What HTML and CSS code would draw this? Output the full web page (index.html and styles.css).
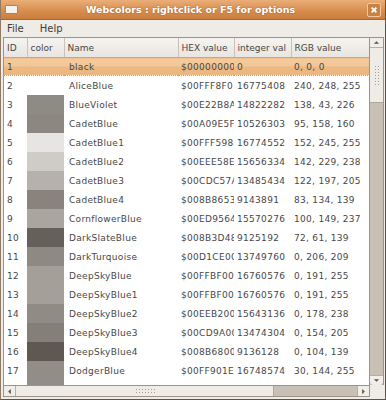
FILE: index.html
```html
<!DOCTYPE html>
<html lang="en">
<head>
  <meta charset="UTF-8" />
  <title>Webcolors</title>
  <link rel="stylesheet" href="styles.css">
</head>
<body>
  <div class="window">
    <div class="titlebar">
      <span class="win-icon"></span>
      <span class="title">Webcolors : rightclick or F5 for options</span>
      <span class="close-btn">
        <svg viewBox="0 0 10 10"><path d="M2 2L8 8M8 2L2 8"/></svg>
      </span>
    </div>

    <div class="menubar">
      <span>File</span>
      <span>Help</span>
    </div>

    <div class="frame">
      <div class="view">
        <div class="list">
          <table class="colors">
            <colgroup>
              <col class="c-id"><col class="c-color"><col class="c-name"><col class="c-hex"><col class="c-int"><col class="c-rgb">
            </colgroup>
            <thead>
              <tr><th>ID</th><th>color</th><th>Name</th><th>HEX value</th><th>integer val</th><th>RGB value</th></tr>
            </thead>
            <tbody id="rows"></tbody>
          </table>
        </div>
        <div class="vscroll">
          <div class="arrow"><svg viewBox="0 0 8 8"><path d="M1 5.5L4 2.5L7 5.5Z"/></svg></div>
          <div class="vthumb"><span class="grip"></span></div>
          <div class="vtrack"></div>
          <div class="arrow arrow-down"><svg viewBox="0 0 8 8"><path d="M1 2.5L4 5.5L7 2.5Z"/></svg></div>
        </div>
      </div>
      <div class="hscroll">
        <div class="arrow-h"><svg viewBox="0 0 8 8"><path d="M5.5 1L2.5 4L5.5 7Z"/></svg></div>
        <div class="hthumb"><span class="grip-h"></span></div>
        <div class="htrack"></div>
        <div class="arrow-h arrow-right"><svg viewBox="0 0 8 8"><path d="M2.5 1L5.5 4L2.5 7Z"/></svg></div>
      </div>
    </div>
  </div>

  <script>
    // id, swatch (as shown), name, hex, integer, rgb
    const colors = [
      [1, '', 'black', '$00000000', '0', '0, 0, 0'],
      [2, '', 'AliceBlue', '$00FFF8F0', '16775408', '240, 248, 255'],
      [3, '#8e8a84', 'BlueViolet', '$00E22B8A', '14822282', '138, 43, 226'],
      [4, '#8d8781', 'CadetBlue', '$00A09E5F', '10526303', '95, 158, 160'],
      [5, '#e6e5e3', 'CadetBlue1', '$00FFF598', '16774552', '152, 245, 255'],
      [6, '#cfccc8', 'CadetBlue2', '$00EEE58E', '15656334', '142, 229, 238'],
      [7, '#b5b2ad', 'CadetBlue3', '$00CDC57A', '13485434', '122, 197, 205'],
      [8, '#8a837d', 'CadetBlue4', '$008B8653', '9143891', '83, 134, 139'],
      [9, '#a9a6a0', 'CornflowerBlue', '$00ED9564', '15570276', '100, 149, 237'],
      [10, '#66605a', 'DarkSlateBlue', '$008B3D48', '9125192', '72, 61, 139'],
      [11, '#8e8983', 'DarkTurquoise', '$00D1CE00', '13749760', '0, 206, 209'],
      [12, '#a49f99', 'DeepSkyBlue', '$00FFBF00', '16760576', '0, 191, 255'],
      [13, '#a49f99', 'DeepSkyBlue1', '$00FFBF00', '16760576', '0, 191, 255'],
      [14, '#918b85', 'DeepSkyBlue2', '$00EEB200', '15643136', '0, 178, 238'],
      [15, '#857f79', 'DeepSkyBlue3', '$00CD9A00', '13474304', '0, 154, 205'],
      [16, '#5f5850', 'DeepSkyBlue4', '$008B6800', '9136128', '0, 104, 139'],
      [17, '#928d87', 'DodgerBlue', '$00FF901E', '16748574', '30, 144, 255'],
      [18, '#928d87', 'DodgerBlue1', '$00FF901E', '16748574', '30, 144, 255']
    ];

    const tbody = document.getElementById('rows');
    colors.forEach(function (c, i) {
      const tr = document.createElement('tr');
      if (i === 0) tr.className = 'selected';
      tr.innerHTML =
        '<td>' + c[0] + '</td>' +
        '<td class="swatch"' + (c[1] ? ' style="background:' + c[1] + '"' : '') + '></td>' +
        '<td class="name">' + c[2] + '</td>' +
        '<td>' + c[3] + '</td>' +
        '<td>' + c[4] + '</td>' +
        '<td>' + c[5] + '</td>';
      tbody.appendChild(tr);
    });
  </script>
</body>
</html>
```

FILE: styles.css
```css
body {
  margin: 0;
  background: #efebe7;
  font-family: "DejaVu Sans", sans-serif;
  color: #474747;
}

.window {
  width: 386px;
  height: 400px;
  box-sizing: border-box;
  display: flex;
  flex-direction: column;
  background: #efebe7;
  border-left: 1px solid #8f7a64;
  border-right: 1px solid #5e5448;
  border-bottom: 1px solid #5e5448;
  overflow: hidden;
}

.titlebar {
  height: 20px;
  flex: none;
  display: flex;
  align-items: center;
  padding: 0 3px;
  background: linear-gradient(#eaae78, #d78c4c 60%, #cb7e3f);
  border-bottom: 1px solid #a8652f;
  box-sizing: border-box;
}

.win-icon {
  width: 11px;
  height: 7px;
  background: #f4f2ef;
  border: 1px solid #9a8676;
  border-radius: 1px;
  margin-left: 1px;
}

.title {
  flex: 1;
  text-align: center;
  color: #fff;
  font-weight: bold;
  font-size: 9.5px;
  text-shadow: 0 0 2px rgba(120, 60, 10, 0.6);
  padding-right: 4px;
}

.close-btn {
  width: 12px;
  height: 12px;
  border: 1px solid #f3c9a0;
  border-radius: 2px;
  background: #c98246;
  display: flex;
  align-items: center;
  justify-content: center;
  margin-right: 1px;
}

.close-btn svg {
  width: 8px;
  height: 8px;
  stroke: #fff;
  stroke-width: 2.2;
}

.menubar {
  height: 16px;
  flex: none;
  display: flex;
  align-items: center;
  gap: 16px;
  padding-left: 6px;
  font-size: 10px;
  color: #3c3c3c;
}

.frame {
  flex: 1;
  display: flex;
  flex-direction: column;
  margin: 1px 1px 2px 2px;
  min-height: 0;
}

.view {
  flex: 1;
  display: flex;
  min-height: 0;
}

.list {
  flex: 1;
  overflow: hidden;
  background: #fff;
  border-left: 1px solid #9d9286;
  border-top: 1px solid #9d9286;
}

.colors {
  border-collapse: collapse;
  table-layout: fixed;
  width: 366px;
  font-size: 9px;
  letter-spacing: 0.3px;
}

.c-id { width: 23px; }
.c-color { width: 37px; }
.c-name { width: 114px; }
.c-hex { width: 56px; }
.c-int { width: 57px; }
.c-rgb { width: 79px; }

.colors th {
  height: 19px;
  padding: 0 0 0 3px;
  text-align: left;
  font-weight: normal;
  letter-spacing: 0;
  white-space: nowrap;
  overflow: hidden;
  background: linear-gradient(#f5f3f0, #e9e5e0);
  border-right: 1px solid #c9c2ba;
  border-bottom: 1px solid #b4aca2;
}

.colors td {
  height: 19px;
  padding: 0 0 0 3px;
  white-space: nowrap;
  overflow: hidden;
}

.colors td.swatch {
  padding: 0;
}

.colors td.name {
  padding-left: 5px;
}

.colors tr.selected td {
  background: linear-gradient(#f4cb9e, #f2c596 50%, #ecb982 50%, #ebb681);
  border-top: 1px dotted #d99b60;
  border-bottom: 1px dotted #d99b60;
  height: 17px;
}

.vscroll {
  width: 13px;
  flex: none;
  display: flex;
  flex-direction: column;
  border: 1px solid #9d9286;
  border-bottom: none;
  background: #c9c0b5;
}

.arrow {
  height: 9px;
  flex: none;
  display: flex;
  align-items: center;
  justify-content: center;
  background: #f1eeea;
  border-bottom: 1px solid #b8afa4;
}

.arrow svg,
.arrow-h svg {
  width: 7px;
  height: 7px;
  fill: #5a524a;
}

.arrow-down {
  border-bottom: none;
  border-top: 1px solid #b8afa4;
  border-radius: 0 0 4px 4px;
}

.vthumb {
  height: 54px;
  flex: none;
  background: #efece8;
  border-bottom: 1px solid #b1a79c;
  display: flex;
  align-items: center;
  justify-content: center;
}

.grip {
  width: 6px;
  height: 20px;
  background: radial-gradient(circle, #a79d92 0.6px, transparent 1px) 0 0 / 3px 3px;
}

.vtrack {
  flex: 1;
}

.hscroll {
  height: 10px;
  flex: none;
  display: flex;
  border: 1px solid #9d9286;
  background: #c9c0b5;
  margin-right: 14px;
}

.arrow-h {
  width: 11px;
  flex: none;
  display: flex;
  align-items: center;
  justify-content: center;
  background: #f1eeea;
  border-right: 1px solid #b8afa4;
}

.arrow-right {
  border-right: none;
  border-left: 1px solid #b8afa4;
}

.hthumb {
  width: 257px;
  flex: none;
  background: #efece8;
  border-right: 1px solid #b1a79c;
  display: flex;
  align-items: center;
  justify-content: center;
}

.grip-h {
  width: 20px;
  height: 6px;
  background: radial-gradient(circle, #a79d92 0.6px, transparent 1px) 0 0 / 3px 3px;
}

.htrack {
  flex: 1;
}
```
